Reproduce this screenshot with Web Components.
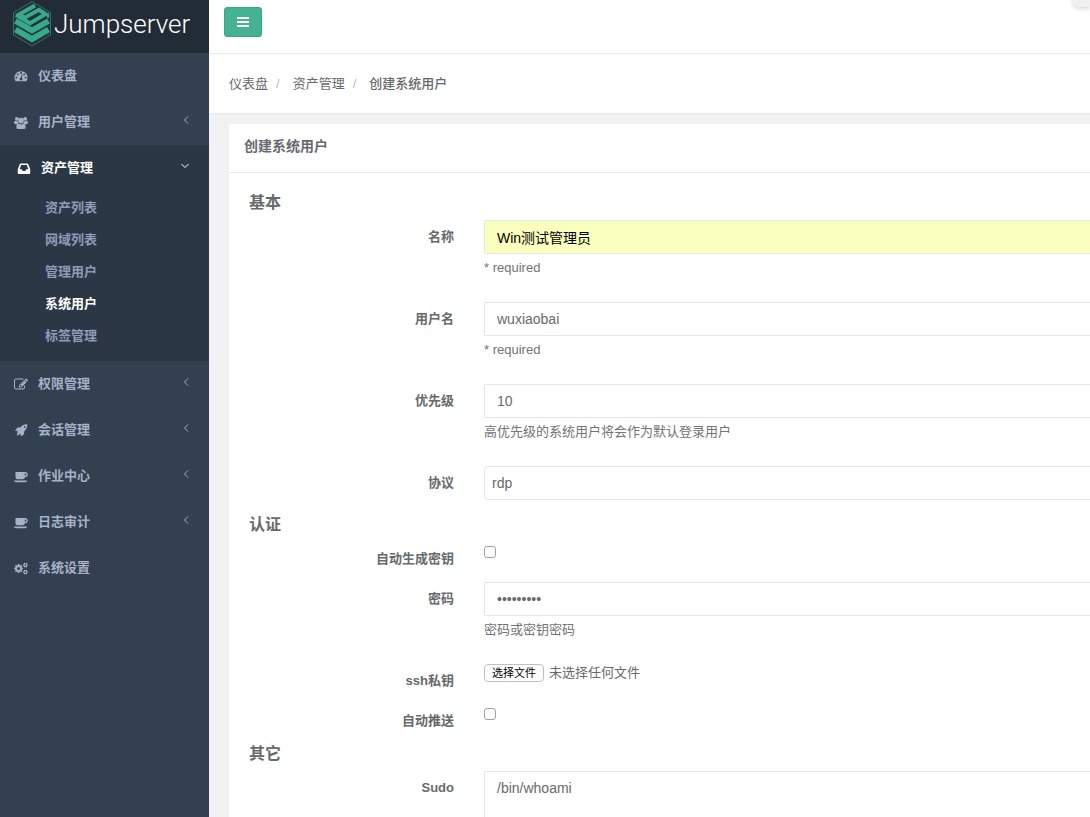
<!DOCTYPE html>
<html lang="zh-CN">
<head>
<meta charset="utf-8">
<meta name="viewport" content="width=device-width, initial-scale=1">
<title>创建系统用户 - Jumpserver</title>
<style>
html, body { margin: 0; height: 100%; }
body {
  font-family: "Liberation Sans", "Noto Sans CJK SC", sans-serif;
  font-size: 13px;
  line-height: 18px;
  color: #676a6c;
  background: #f2f2f5;
  overflow: hidden;
}
</style>
</head>
<body>
<app-shell>
  <side-nav slot="nav">
    <nav-item icon="gauge" label="仪表盘"></nav-item>
    <nav-item icon="group" label="用户管理" expandable></nav-item>
    <nav-item icon="inbox" label="资产管理" expandable open>
      <nav-link label="资产列表"></nav-link>
      <nav-link label="网域列表"></nav-link>
      <nav-link label="管理用户"></nav-link>
      <nav-link label="系统用户" current></nav-link>
      <nav-link label="标签管理"></nav-link>
    </nav-item>
    <nav-item icon="edit" label="权限管理" expandable></nav-item>
    <nav-item icon="rocket" label="会话管理" expandable></nav-item>
    <nav-item icon="coffee" label="作业中心" expandable></nav-item>
    <nav-item icon="coffee" label="日志审计" expandable></nav-item>
    <nav-item icon="cogs" label="系统设置"></nav-item>
  </side-nav>
  <top-bar></top-bar>
  <bread-crumb></bread-crumb>
  <form-panel heading="创建系统用户">
    <form-section heading="基本">
      <form-row kind="text" label="名称" value="Win测试管理员" help="* required" filled></form-row>
      <form-row kind="text" label="用户名" value="wuxiaobai" help="* required"></form-row>
      <form-row kind="text" label="优先级" value="10" help="高优先级的系统用户将会作为默认登录用户"></form-row>
      <form-row kind="select" label="协议" value="rdp"></form-row>
    </form-section>
    <form-section heading="认证">
      <form-row kind="checkbox" label="自动生成密钥"></form-row>
      <form-row kind="password" label="密码" value="123456789" help="密码或密钥密码"></form-row>
      <form-row kind="file" label="ssh私钥"></form-row>
      <form-row kind="checkbox" label="自动推送"></form-row>
    </form-section>
    <form-section heading="其它">
      <form-row kind="textarea" label="Sudo" value="/bin/whoami"></form-row>
    </form-section>
  </form-panel>
</app-shell>

<script>
const define = (name, render, setup) => {
  customElements.define(name, class extends HTMLElement {
    connectedCallback() {
      if (this.shadowRoot) return;
      const root = this.attachShadow({ mode: 'open' });
      const template = document.createElement('template');
      template.innerHTML = render(this);
      root.append(template.content.cloneNode(true));
      if (setup) setup(this, root);
    }
  });
};
const attr = (el, name) => el.getAttribute(name) || '';

const gear = (cx, cy, r, teeth) => {
  let d = '';
  for (let i = 0; i < teeth; i++) {
    [[-.34, .76], [-.22, 1], [.22, 1], [.34, .76]].forEach(([o, k], j) => {
      const a = (i + o) * 2 * Math.PI / teeth;
      d += (i || j ? 'L' : 'M') + (cx + Math.cos(a) * r * k).toFixed(2) + ' ' + (cy + Math.sin(a) * r * k).toFixed(2);
    });
  }
  const h = r * .36;
  return d + `ZM${cx - h} ${cy}a${h} ${h} 0 1 0 ${2 * h} 0a${h} ${h} 0 1 0 ${-2 * h} 0Z`;
};

const icons = {
  gauge: ['0 100 1792 1792', 'M384 1152q0-53-37.5-90.5t-90.5-37.5-90.5 37.5-37.5 90.5 37.5 90.5 90.5 37.5 90.5-37.5 37.5-90.5zm192-448q0-53-37.5-90.5t-90.5-37.5-90.5 37.5-37.5 90.5 37.5 90.5 90.5 37.5 90.5-37.5 37.5-90.5zm428 481l101-382q6-26-7.5-48.5t-38.5-29.5-48 6.5-30 39.5l-101 382q-60 5-107 43.5t-63 98.5q-20 77 20 146t117 89 146-20 89-117q16-60-6-117t-72-91zm660-33q0-53-37.5-90.5t-90.5-37.5-90.5 37.5-37.5 90.5 37.5 90.5 90.5 37.5 90.5-37.5 37.5-90.5zm-640-640q0-53-37.5-90.5t-90.5-37.5-90.5 37.5-37.5 90.5 37.5 90.5 90.5 37.5 90.5-37.5 37.5-90.5zm448 192q0-53-37.5-90.5t-90.5-37.5-90.5 37.5-37.5 90.5 37.5 90.5 90.5 37.5 90.5-37.5 37.5-90.5zm320 448q0 261-141 483-19 29-54 29h-1402q-35 0-54-29-141-221-141-483 0-182 71-348t191-286 286-191 348-71 348 71 286 191 191 286 71 348z'],
  group: ['0 0 15 14', 'M3 1a2 2 0 1 1 0 4a2 2 0 0 1 0-4zM12 1a2 2 0 1 1 0 4a2 2 0 0 1 0-4zM7.5 2a3 3 0 1 1 0 6a3 3 0 0 1 0-6zM1.3 5Q3 6.2 4 5.4Q4 7 5 8Q3.6 8 2.8 9H1.6Q0 9 0 7.4Q0 5 1.3 5zM13.7 5Q12 6.2 11 5.4Q11 7 10 8Q11.4 8 12.2 9H13.4Q15 9 15 7.4Q15 5 13.7 5zM4.8 8.2Q7.5 10.2 10.2 8.2Q12.5 8.4 12.5 12Q12.5 14 10.6 14H4.4Q2.5 14 2.5 12Q2.5 8.4 4.8 8.2z'],
  inbox: ['0 0 14 14', 'M3.4 1.6H10.6Q11.3 1.6 11.6 2.3L13.4 7Q13.7 7.7 13.7 8.4V12Q13.7 12.8 12.9 12.8H1.1Q.3 12.8 .3 12V8.4Q.3 7.7 .6 7L2.4 2.3Q2.7 1.6 3.4 1.6zM3.9 3.3L2.3 7.7H4.6L5.5 9.6H8.5L9.4 7.7H11.7L10.1 3.3z'],
  edit: ['0 100 1792 1600', 'M888 1184l116-116-152-152-116 116v56h96v96h56zm440-720q-16-16-33 1l-350 350q-17 17-1 33t33-1l350-350q17-17 1-33zm80 594v190q0 119-84.5 203.5t-203.5 84.5h-832q-119 0-203.5-84.5t-84.5-203.5v-832q0-119 84.5-203.5t203.5-84.5h832q63 0 117 25 15 7 18 23 3 17-9 29l-49 49q-14 14-32 8-23-6-45-6h-832q-66 0-113 47t-47 113v832q0 66 47 113t113 47h832q66 0 113-47t47-113v-126q0-13 9-22l64-64q15-15 35-7t20 29zm-96-738l288 288-672 672h-288v-288zm444 132l-92 92-288-288 92-92q28-28 68-28t68 28l152 152q28 28 28 68t-28 68z'],
  rocket: ['0 0 14 14', 'M13.8 .3Q14 4.8 10.4 8L10.3 11L7.2 13.2L6.5 12.8L7 10.3L6.1 11.2L5.3 10.6L5 11.5L2.6 12.4L3 9.8L3.3 8.8L2.8 8L3.8 7L1.2 7.5L.8 6.9L3.1 3.9L6 3.7Q9.2 .1 13.8 .3zM11 2.3a.9 .9 0 1 0 .01 0z'],
  coffee: ['0 0 14 13', 'M1.500 2H11Q13.700 2 13.700 4.600T11 7.200H10.800Q10.600 9.300 8.800 9.300H3.500Q1.500 9.300 1.500 7.300zM10.800 3.400V5.800H11Q12.300 5.800 12.300 4.600T11 3.400zM0 10.400H13Q13 12.200 11 12.200H2Q0 12.200 0 10.400z'],
  cogs: ['0 0 15 14', gear(4.9, 7, 4.8, 8) + gear(12.2, 3.3, 2.7, 6) + gear(12.2, 10.9, 2.7, 6)]
};

define('ui-icon', el => {
  const [box, d] = icons[attr(el, 'name')];
  return `
  <style>:host{display:block;width:14px;height:13px} svg{display:block;width:100%;height:100%;fill:currentColor}</style>
  <svg viewBox="${box}" aria-hidden="true"><path fill-rule="evenodd" d="${d}"/></svg>`;
});

define('app-shell', () => `
  <style>
    :host{display:grid;grid-template-columns:209px minmax(0,1fr);height:100vh;overflow:hidden}
    main{min-width:0;overflow:hidden;background:#f2f2f5}
    /* small tab of an overlay window at the corner of the screen */
    .corner{position:absolute;top:0;right:0;width:18px;height:7px;border-bottom-left-radius:8px;background:#f0f0f0;box-shadow:0 1px 5px #0003}
  </style>
  <slot name="nav"></slot>
  <main><slot></slot></main>
  <div class="corner"></div>`);

define('side-nav', () => `
  <style>
    :host{display:block;background:#334050;overflow:hidden}
    .brand{display:flex;align-items:center;gap:2px;height:53px;box-sizing:border-box;padding:0 0 5px 12px;background:#222c36;color:#fff;text-decoration:none;font:300 26px/32px Roboto,"Open Sans",sans-serif}
    svg{display:block;flex:none}
  </style>
  <a class="brand" href="#">
    <svg width="40" height="48" viewBox="0 0 40 48" aria-hidden="true">
      <path d="M20 1.500L38.500 12.500V35L20 46L1.500 35V12.500Z" fill="#203439" stroke="#3c6c6b"/>
      <g fill="none" stroke="#39a98b">
        <path stroke-width="4" d="M23 5.500L7 14.500L12.500 17.800L27 9.800L33.500 14.200L18 23.200L4 15"/>
        <path stroke-width="5.500" d="M3.500 21L20 30.500L36.500 21"/>
        <path stroke-width="6" d="M3.500 29.500L20 39L36.500 29.500"/>
      </g>
      <path d="M36 13V18" stroke="#39a98b" stroke-width="2"/>
    </svg>
    <span>Jumpserver</span>
  </a>
  <nav aria-label="主菜单"><slot></slot></nav>`);

define('nav-item', el => `
  <style>
    :host{display:block;color:#a7b1c8}
    :host([open]){background:#2b3744;color:#fff;padding-bottom:10px}
    a{display:flex;align-items:center;gap:10px;height:46px;box-sizing:border-box;padding:0 18px 0 14px;color:inherit;text-decoration:none;font-weight:600}
    :host([open]) a{padding-left:17px}
    span{flex:1}
    .arrow{fill:none;stroke:currentColor;width:10px;height:10px;margin-bottom:5px}
  </style>
  <a href="#"><ui-icon name="${attr(el, 'icon')}"></ui-icon><span>${attr(el, 'label')}</span>
  ${el.hasAttribute('expandable') ? `<svg class="arrow" viewBox="0 0 10 10" aria-hidden="true"><path d="${el.hasAttribute('open') ? 'M.5 3L4 6.5L7.5 3' : 'M7 1.5L3.5 5L7 8.5'}"/></svg>` : ''}</a>
  <slot></slot>`);

define('nav-link', el => `
  <style>
    :host{display:block;color:#8e9bb9}
    :host([current]){color:#fff}
    a{display:block;padding:8px 10px 6px 45px;line-height:18px;font-weight:600;color:inherit;text-decoration:none}
  </style>
  <a href="#">${attr(el, 'label')}</a>`);

define('top-bar', () => `
  <style>
    :host{display:block;height:53px;padding:7px 15px;box-sizing:border-box;background:#fff}
    button{display:flex;align-items:center;justify-content:center;width:38px;height:30px;padding:0;border:1px solid #3aa588;border-radius:3px;background:#45b393;color:#fff}
    svg{display:block;fill:currentColor}
  </style>
  <button type="button" aria-label="切换菜单"><svg width="12" height="10" viewBox="0 0 12 10"><path d="M0 0h12v2H0zM0 4h12v2H0zM0 8h12v2H0z"/></svg></button>`);

define('bread-crumb', () => `
  <style>
    :host{display:block;background:#fff;border-top:1px solid #e7eaec;border-bottom:1px solid #e7eaec}
    ol{display:flex;margin:0;padding:21px 20px 20px;list-style:none}
    a{color:inherit;text-decoration:none}
    li + li::before{content:"/";padding:0 13px 0 8px;color:#bbb;font-weight:400}
    strong{font-weight:500}
  </style>
  <nav aria-label="位置"><ol><li><a href="#">仪表盘</a></li><li><a href="#">资产管理</a></li><li><strong>创建系统用户</strong></li></ol></nav>`);

define('form-panel', el => `
  <style>
    :host{display:block;margin:10px -40px 0 20px;background:#fff}
    h5{margin:0;padding:13px 15px 17px;border-bottom:1px solid #e7eaec;font-size:14px;line-height:18px;font-weight:600}
    form{padding:21px 20px}
  </style>
  <h5>${attr(el, 'heading')}</h5>
  <form><slot></slot></form>`);

define('form-section', el => `
  <style>
    :host{display:block}
    h3{margin:0 0 8px;font-size:16px;line-height:18px;font-weight:600}
    .rows{display:grid;gap:15px;padding-bottom:16px}
  </style>
  <h3>${attr(el, 'heading')}</h3>
  <div class="rows"><slot></slot></div>`);

const controls = {
  text: v => `<input id="f" class="box" type="text" value="${v}">`,
  password: v => `<input id="f" class="box" type="password" value="${v}">`,
  select: v => `<select id="f" class="box"><option>${v}</option></select>`,
  textarea: v => `<textarea id="f" class="box" rows="4">${v}</textarea>`,
  checkbox: () => `<input id="f" type="checkbox">`,
  file: () => `<div class="file"><button type="button">选择文件</button><output>未选择任何文件</output><input id="f" type="file" hidden></div>`
};

define('form-row', el => `
  <style>
    :host{display:grid;grid-template-columns:205px minmax(0,1fr);column-gap:30px}
    label{padding-top:8px;text-align:right;font-weight:600;line-height:17px}
    .box{display:block;width:100%;height:34px;box-sizing:border-box;margin:0;padding:6px 12px;border:1px solid #e5e6e7;border-radius:1px;background:#fff;color:inherit;font-family:inherit;font-size:14px;line-height:20px;outline:0}
    :host([filled]) .box{background:#faffbd;color:#000}
    select.box{appearance:none;padding:6px 7px;border-radius:4px}
    textarea.box{height:auto;resize:none}
    input[type=checkbox]{appearance:none;display:block;width:12px;height:12px;margin:4px 0 9px;border:1px solid #a0a0a0;border-radius:3px;background:#fff}
    input[type=checkbox]:checked{background:#1ab394}
    p{margin:5px 0 10px;line-height:18px;color:#737373}
    .file{display:flex;gap:5px;height:18px}
    .file button{width:60px;height:18px;padding:0;border:1px solid #c0c0c0;border-radius:4px;background:#fff;color:#000;font-family:inherit;font-size:11px;line-height:16px}
  </style>
  <label for="f">${attr(el, 'label')}</label>
  <div>${controls[attr(el, 'kind')](attr(el, 'value'))}${attr(el, 'help') ? `<p>${attr(el, 'help')}</p>` : ''}</div>`,
(el, root) => {
  const file = root.querySelector('input[type=file]');
  if (!file) return;
  root.querySelector('button').onclick = () => file.click();
  file.onchange = () => { root.querySelector('output').value = file.files[0] ? file.files[0].name : '未选择任何文件'; };
});
</script>
</body>
</html>
